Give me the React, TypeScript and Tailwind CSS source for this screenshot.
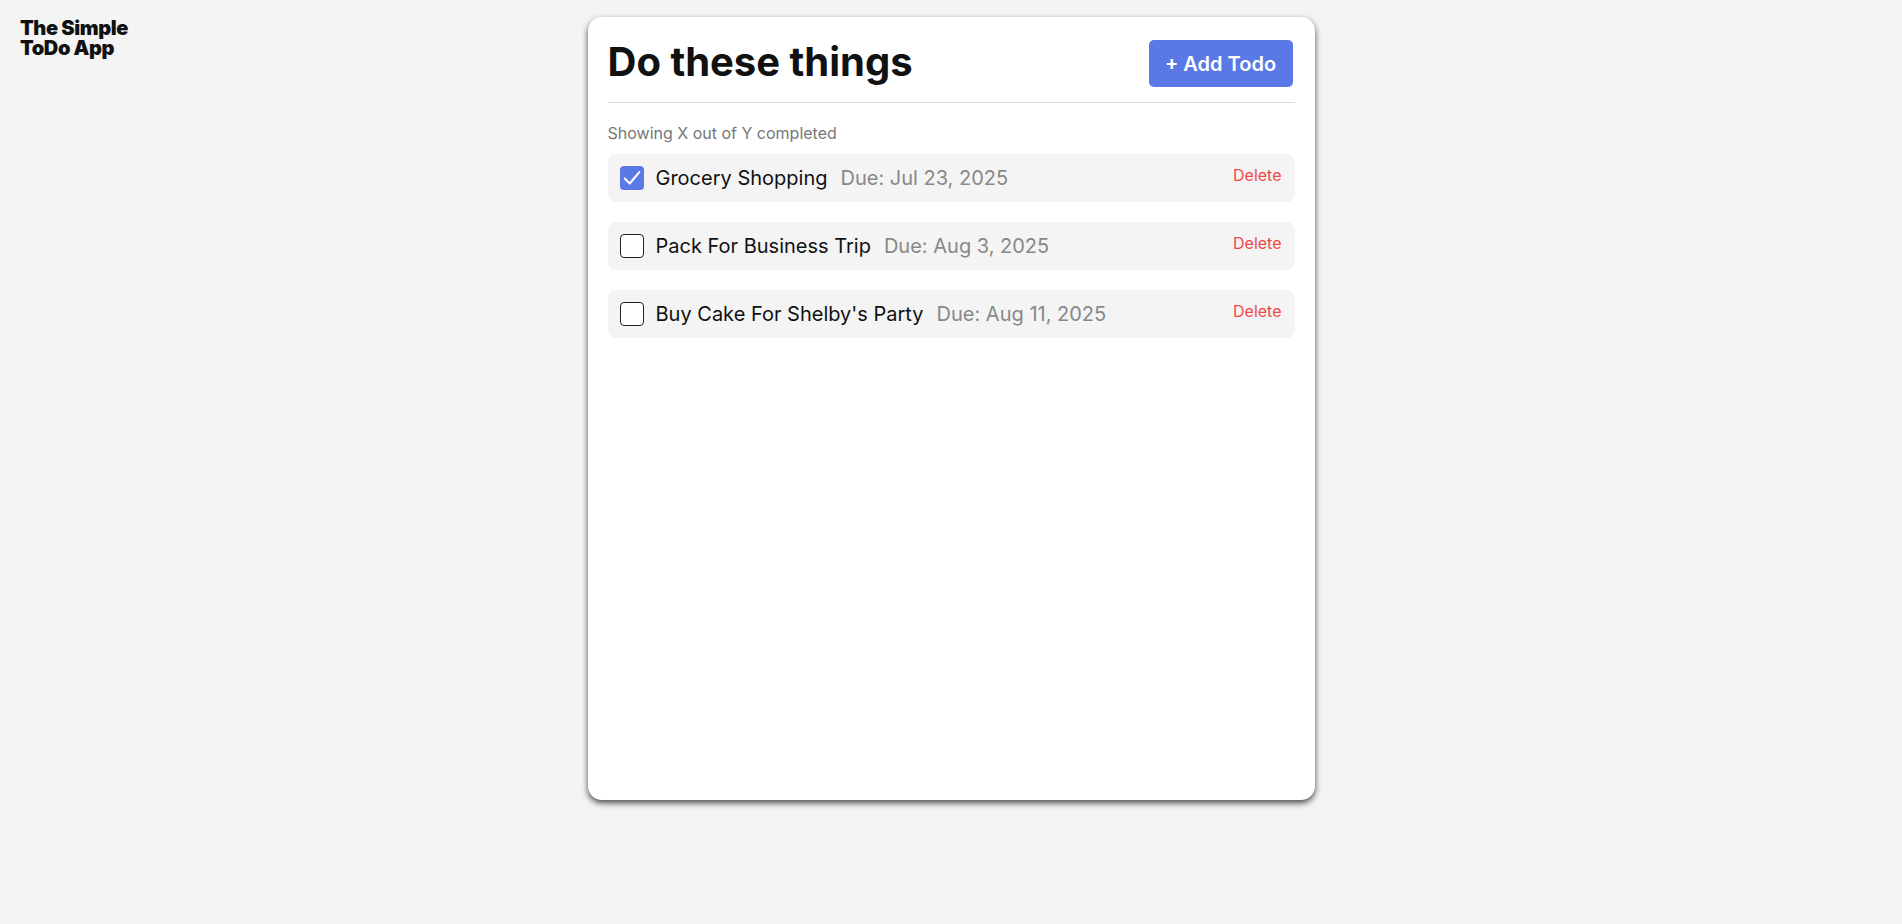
import React, { useState } from "react";

type Todo = {
    id: number;
    title: string;
    due: string;
    done: boolean;
};

const initialTodos: Todo[] = [
    { id: 1, title: "Grocery Shopping", due: "Jul 23, 2025", done: true },
    { id: 2, title: "Pack For Business Trip", due: "Aug 3, 2025", done: false },
    { id: 3, title: "Buy Cake For Shelby's Party", due: "Aug 11, 2025", done: false },
];

function CheckBox({ checked, onToggle }: { checked: boolean; onToggle: () => void }) {
    return (
        <button
            type="button"
            onClick={onToggle}
            className={
                checked
                    ? "w-6 h-6 shrink-0 rounded-[4px] bg-[#5a78e6] flex items-center justify-center"
                    : "w-6 h-6 shrink-0 rounded-[4px] border border-[#222] bg-white"
            }
        >
            {checked && (
                <svg viewBox="0 0 24 24" className="w-[22px] h-[22px]" fill="none" stroke="white" strokeWidth="2.2" strokeLinecap="round" strokeLinejoin="round">
                    <polyline points="4 12.5 9.5 18 20 5.5" />
                </svg>
            )}
        </button>
    );
}

export default function App() {
    const [todos, setTodos] = useState<Todo[]>(initialTodos);

    const toggle = (id: number) =>
        setTodos((prev) => prev.map((t) => (t.id === id ? { ...t, done: !t.done } : t)));

    const remove = (id: number) => setTodos((prev) => prev.filter((t) => t.id !== id));

    return (
        <div
            className="min-h-screen bg-[#f4f4f4] grid grid-cols-[1fr_727px_1fr]"
            style={{ fontFamily: "Inter, 'Noto Sans', sans-serif" }}
        >
            <div className="pl-5 pt-[18px]">
                <h2 className="text-[20px] font-black leading-[20px] tracking-[-0.02em] text-[#111]">
                    The Simple
                    <br />
                    ToDo App
                </h2>
            </div>

            <div className="mt-[17px] h-[783px] bg-white rounded-[14px] shadow-[0_3px_6px_rgba(0,0,0,0.7)] px-5 pt-[23px] flex flex-col">
                <div className="flex items-center justify-between pb-[15px] border-b border-[#dcdcdc]">
                    <h1 className="text-[40px] font-bold leading-none text-[#111] -mt-1">Do these things</h1>
                    <button className="h-[47px] w-[144px] mr-[2px] rounded-[5px] bg-[#5a78e6] text-white text-[20px] font-semibold">
                        + Add Todo
                    </button>
                </div>

                <p className="mt-5 text-[16px] leading-5 text-[#777]">Showing X out of Y completed</p>

                <ul className="mt-[11px] flex flex-col gap-5">
                    {todos.map((todo) => (
                        <li key={todo.id} className="h-12 rounded-lg bg-[#f4f4f4] pl-3 pr-[13px] flex items-center">
                            <CheckBox checked={todo.done} onToggle={() => toggle(todo.id)} />
                            <span className="ml-3 text-[20px] leading-6 text-[#111]">{todo.title}</span>
                            <span className="ml-[13px] text-[20px] leading-6 text-[#888]">Due: {todo.due}</span>
                            <button
                                onClick={() => remove(todo.id)}
                                className="ml-auto self-start pt-[9px] text-[16px] leading-6 text-[#f04848]"
                            >
                                Delete
                            </button>
                        </li>
                    ))}
                </ul>
            </div>

            <div />
        </div>
    );
}
